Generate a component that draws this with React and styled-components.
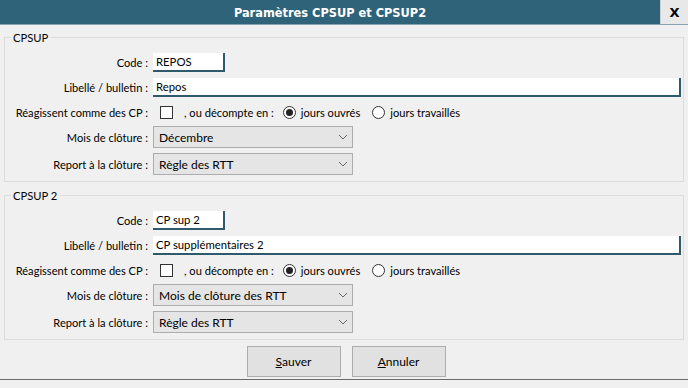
import styled, { createGlobalStyle } from "styled-components";

const Global = createGlobalStyle`
  html, body { margin: 0; padding: 0; background: #f0f0f0; }
  body { font-family: Lato, "Noto Sans", sans-serif; font-size: 11px; color: #000; }
`;

const Window = styled.div`
  width: 688px;
  height: 388px;
  overflow: hidden;
  background: #f0f0f0;
  display: flex;
  flex-direction: column;
`;

const TitleBar = styled.div`
  height: 24px;
  display: flex;
  align-items: stretch;
  background: #2e6379;
  border-bottom: 1px solid #8aa4b0;
`;

const Title = styled.div`
  flex: 1;
  display: flex;
  align-items: center;
  justify-content: center;
  color: #fff;
  font-family: "DejaVu Sans", sans-serif;
  font-weight: bold;
  font-size: 11.4px;
  padding-top: 1px;
`;

const Close = styled.button`
  width: 28px;
  border: none;
  border-left: 1px solid #c8d0d4;
  background: #e8e8e8;
  font-family: "DejaVu Sans", sans-serif;
  font-weight: bold;
  font-size: 13px;
  color: #000;
  padding: 0;
`;

const Body = styled.div`
  padding: 5px 4px 0;
  display: flex;
  flex-direction: column;
  gap: 6px;
`;

const Group = styled.fieldset`
  margin: 0;
  border: 1px solid #dcdcdc;
  padding: 5px 2px 3px 0;
  display: grid;
  grid-template-columns: 143px 1fr;
  column-gap: 5px;
  grid-template-rows: 24px 26px 24px 26px 28px;
  align-items: center;
`;

const Legend = styled.legend`
  margin-left: 6px;
  padding: 0 2px;
  line-height: 15px;
  font-size: 11.2px;
`;

const Label = styled.label`
  text-align: right;
  white-space: nowrap;
  font-size: 11.1px;
`;

const TextInput = styled.div`
  height: 19px;
  width: ${({ $w }) => $w};
  box-sizing: border-box;
  background: #fff;
  border-right: 2px solid #2f5a6e;
  border-bottom: 2px solid #2f5a6e;
  padding: 0 3px;
  display: flex;
  align-items: center;
  white-space: nowrap;
  font-size: 11.3px;
`;

const Inline = styled.div`
  display: flex;
  align-items: center;
  white-space: nowrap;
  font-size: 11.1px;
`;

const Check = styled.span`
  width: 13px;
  height: 13px;
  box-sizing: border-box;
  border: 1px solid #333;
  background: #fff;
  margin: 0 11px 0 7px;
`;

const Radio = styled.span`
  width: 13px;
  height: 13px;
  box-sizing: border-box;
  border: 1px solid #333;
  border-radius: 50%;
  background: #fff;
  margin: ${({ $first }) => ($first ? "0 5px 0 9px" : "0 5px 0 12px")};
  display: flex;
  align-items: center;
  justify-content: center;
  &::after {
    content: "";
    width: 7px;
    height: 7px;
    border-radius: 50%;
    background: ${({ $on }) => ($on ? "#222" : "transparent")};
  }
`;

const Select = styled.div`
  width: 200px;
  height: 22px;
  box-sizing: border-box;
  background: #e5e5e5;
  border: 1px solid #adadad;
  display: flex;
  align-items: center;
  justify-content: space-between;
  padding: 0 4px 0 5px;
  white-space: nowrap;
  font-size: 12px;
`;

const Footer = styled.div`
  height: 40px;
  box-sizing: border-box;
  display: flex;
  justify-content: center;
  align-items: flex-start;
  padding: 6px 0 0 4px;
  gap: 11px;
  border-bottom: 1px solid #6b6b6b;
`;

const Button = styled.button`
  width: 94px;
  height: 31px;
  background: #e1e1e1;
  border: 1px solid #adadad;
  font-family: Lato, "Noto Sans", sans-serif;
  font-size: 12px;
  color: #000;
  padding: 0;
  u { text-decoration: underline; }
`;

const Chevron = () => (
  <svg width="10" height="6" viewBox="0 0 10 6">
    <polyline points="1,1 5,5 9,1" fill="none" stroke="#666" strokeWidth="1" />
  </svg>
);

function Section({ title, code, libelle, mois }) {
  return (
    <Group>
      <Legend>{title}</Legend>
      <Label>Code :</Label>
      <TextInput $w="72px">{code}</TextInput>
      <Label>Libellé / bulletin :</Label>
      <TextInput $w="100%">{libelle}</TextInput>
      <Label>Réagissent comme des CP :</Label>
      <Inline>
        <Check />
        , ou décompte en :
        <Radio $first $on />
        jours ouvrés
        <Radio />
        jours travaillés
      </Inline>
      <Label>Mois de clôture :</Label>
      <Select>
        {mois}
        <Chevron />
      </Select>
      <Label>Report à la clôture :</Label>
      <Select>
        Règle des RTT
        <Chevron />
      </Select>
    </Group>
  );
}

export default function App() {
  return (
    <Window>
      <Global />
      <TitleBar>
        <Title>Paramètres CPSUP et CPSUP2</Title>
        <Close>X</Close>
      </TitleBar>
      <Body>
        <Section title="CPSUP" code="REPOS" libelle="Repos" mois="Décembre" />
        <Section
          title="CPSUP 2"
          code="CP sup 2"
          libelle="CP supplémentaires 2"
          mois="Mois de clôture des RTT"
        />
      </Body>
      <Footer>
        <Button>
          <u>S</u>auver
        </Button>
        <Button>
          <u>A</u>nnuler
        </Button>
      </Footer>
    </Window>
  );
}
